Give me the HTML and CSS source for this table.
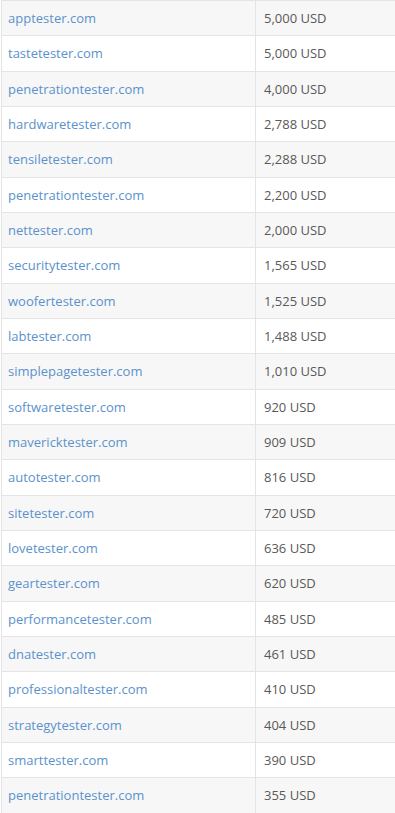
FILE: index.html
```html
<!DOCTYPE html>
<html>
<head>
<meta charset="utf-8">
<link rel="stylesheet" href="styles.css">
</head>
<body>
<table class="sales">
<tbody>
<tr><td class="name"><a href="#">apptester.com</a></td><td class="price">5,000 USD</td></tr>
<tr><td class="name"><a href="#">tastetester.com</a></td><td class="price">5,000 USD</td></tr>
<tr><td class="name"><a href="#">penetrationtester.com</a></td><td class="price">4,000 USD</td></tr>
<tr><td class="name"><a href="#">hardwaretester.com</a></td><td class="price">2,788 USD</td></tr>
<tr><td class="name"><a href="#">tensiletester.com</a></td><td class="price">2,288 USD</td></tr>
<tr><td class="name"><a href="#">penetrationtester.com</a></td><td class="price">2,200 USD</td></tr>
<tr><td class="name"><a href="#">nettester.com</a></td><td class="price">2,000 USD</td></tr>
<tr><td class="name"><a href="#">securitytester.com</a></td><td class="price">1,565 USD</td></tr>
<tr><td class="name"><a href="#">woofertester.com</a></td><td class="price">1,525 USD</td></tr>
<tr><td class="name"><a href="#">labtester.com</a></td><td class="price">1,488 USD</td></tr>
<tr><td class="name"><a href="#">simplepagetester.com</a></td><td class="price">1,010 USD</td></tr>
<tr><td class="name"><a href="#">softwaretester.com</a></td><td class="price">920 USD</td></tr>
<tr><td class="name"><a href="#">mavericktester.com</a></td><td class="price">909 USD</td></tr>
<tr><td class="name"><a href="#">autotester.com</a></td><td class="price">816 USD</td></tr>
<tr><td class="name"><a href="#">sitetester.com</a></td><td class="price">720 USD</td></tr>
<tr><td class="name"><a href="#">lovetester.com</a></td><td class="price">636 USD</td></tr>
<tr><td class="name"><a href="#">geartester.com</a></td><td class="price">620 USD</td></tr>
<tr><td class="name"><a href="#">performancetester.com</a></td><td class="price">485 USD</td></tr>
<tr><td class="name"><a href="#">dnatester.com</a></td><td class="price">461 USD</td></tr>
<tr><td class="name"><a href="#">professionaltester.com</a></td><td class="price">410 USD</td></tr>
<tr><td class="name"><a href="#">strategytester.com</a></td><td class="price">404 USD</td></tr>
<tr><td class="name"><a href="#">smarttester.com</a></td><td class="price">390 USD</td></tr>
<tr><td class="name"><a href="#">penetrationtester.com</a></td><td class="price">355 USD</td></tr>
</tbody>
</table>
</body>
</html>
```
FILE: styles.css
```css
html, body {
  margin: 0;
  padding: 0;
  background: #ffffff;
}
body {
  font-family: "Open Sans", "Liberation Sans", sans-serif;
  font-size: 13px;
  color: #555555;
}
.sales {
  width: 394px;
  margin-left: 1px;
  border-collapse: collapse;
}
.sales td {
  border-top: 1px solid #e4e4e4;
  border-left: 1px solid #e4e4e4;
  padding: 8px 6px 8px 6px;
  line-height: 18.333px;
  height: 18.333px;
  vertical-align: middle;
  white-space: nowrap;
}
.sales tr:nth-child(odd) td {
  background: #f7f7f7;
}
.sales td.name {
  width: 241px;
}
.sales td.price {
  padding-left: 8px;
  color: #595959;
}
.sales a {
  color: #5b92cc;
  text-decoration: none;
}
```
